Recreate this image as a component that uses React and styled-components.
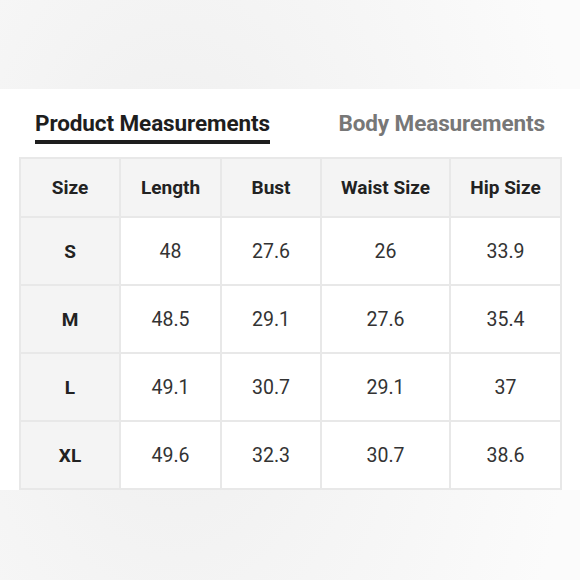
import React from "react";
import styled, { createGlobalStyle } from "styled-components";

const Global = createGlobalStyle`
  html, body { margin: 0; padding: 0; }
  body {
    font-family: Roboto, "Noto Sans", "Liberation Sans", sans-serif;
    background: #fff;
  }
`;

const Page = styled.div`
  width: 580px;
  height: 580px;
  overflow: hidden;
  display: flex;
  flex-direction: column;
  background: radial-gradient(ellipse 70% 120% at 30% 50%, #ededed 0%, #f4f4f4 45%, #fbfbfb 100%);
`;

const TopBand = styled.div`
  height: 89px;
  flex: none;
`;

const Panel = styled.section`
  background: #fff;
  padding: 0 20px 0 19px;
  display: flex;
  flex-direction: column;
`;

const Tabs = styled.div`
  display: flex;
  justify-content: space-between;
  padding: 20px 15px 0 16px;
  margin-bottom: 13px;
`;

const Tab = styled.div`
  font-size: 22.5px;
  font-weight: 700;
  letter-spacing: -0.1px;
  line-height: 28px;
  color: ${(p) => (p.$active ? "#1e1e1e" : "#777777")};
  padding-bottom: 3px;
  border-bottom: 4px solid ${(p) => (p.$active ? "#1e1e1e" : "transparent")};
`;

const Table = styled.table`
  width: 541px;
  border-collapse: collapse;
  table-layout: fixed;
  border: 2px solid #e8e8e8;
`;

const Th = styled.th`
  height: 57px;
  padding: 0;
  background: #f4f4f4;
  border: 2px solid #e8e8e8;
  font-size: 19px;
  font-weight: 700;
  color: #222;
  text-align: center;
  vertical-align: middle;
`;

const Td = styled.td`
  height: 66px;
  padding: 0;
  border: 2px solid #e8e8e8;
  font-size: ${(p) => (p.$head ? "19px" : "19.5px")};
  font-weight: ${(p) => (p.$head ? 700 : 400)};
  color: ${(p) => (p.$head ? "#222" : "#333")};
  background: ${(p) => (p.$head ? "#f4f4f4" : "#fff")};
  text-align: center;
  vertical-align: middle;
`;

const cols = [
  { label: "Size", w: 100 },
  { label: "Length", w: 101 },
  { label: "Bust", w: 100 },
  { label: "Waist Size", w: 129 },
  { label: "Hip Size", w: 111 },
];

const rows = [
  ["S", "48", "27.6", "26", "33.9"],
  ["M", "48.5", "29.1", "27.6", "35.4"],
  ["L", "49.1", "30.7", "29.1", "37"],
  ["XL", "49.6", "32.3", "30.7", "38.6"],
];

export default function App() {
  return (
    <Page>
      <Global />
      <TopBand />
      <Panel>
        <Tabs>
          <Tab $active>Product Measurements</Tab>
          <Tab>Body Measurements</Tab>
        </Tabs>
        <Table>
          <colgroup>
            {cols.map((c) => (
              <col key={c.label} style={{ width: c.w }} />
            ))}
          </colgroup>
          <thead>
            <tr>
              {cols.map((c) => (
                <Th key={c.label}>{c.label}</Th>
              ))}
            </tr>
          </thead>
          <tbody>
            {rows.map((r) => (
              <tr key={r[0]}>
                {r.map((v, i) => (
                  <Td key={i} $head={i === 0}>
                    {v}
                  </Td>
                ))}
              </tr>
            ))}
          </tbody>
        </Table>
      </Panel>
    </Page>
  );
}
